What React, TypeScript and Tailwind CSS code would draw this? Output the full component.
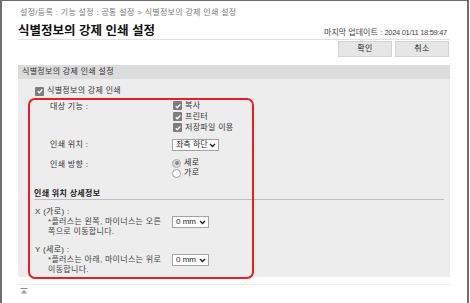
import React from 'react';

const Check = () => (
  <span className="flex h-[9px] w-[9px] shrink-0 items-center justify-center rounded-[1px] bg-[#7d7d7d]">
    <svg viewBox="0 0 10 10" className="h-[8px] w-[8px]">
      <path d="M2.2 5.3 4.2 7.2 7.9 2.9" fill="none" stroke="#fff" strokeWidth="1.7" />
    </svg>
  </span>
);

const Radio = ({ on }: { on?: boolean }) =>
  on ? (
    <span className="flex h-[9px] w-[9px] shrink-0 items-center justify-center rounded-full border border-[#a8a8a8] bg-[#dcdcdc]">
      <span className="h-[4px] w-[4px] rounded-full bg-[#8a8a8a]" />
    </span>
  ) : (
    <span className="h-[9px] w-[9px] shrink-0 rounded-full border border-[#9a9a9a] bg-white" />
  );

const Chevron = () => (
  <svg viewBox="0 0 8 6" className="h-[5px] w-[7px]">
    <path d="M1 1.2 4 4.3 7 1.2" fill="none" stroke="#222" strokeWidth="1.6" />
  </svg>
);

const Dropdown = ({ value, w }: { value: string; w: string }) => (
  <div className={`flex h-[12px] items-center justify-between border border-[#a3a3a3] bg-white pl-[3px] pr-[2px] tracking-normal ${w}`}>
    <span className="leading-[10px] text-[#222]">{value}</span>
    <Chevron />
  </div>
);

export default function App() {
  return (
    <div className="h-[303px] w-[470px] overflow-hidden bg-white font-['Liberation_Sans','Noto_Sans_CJK_KR',sans-serif] text-[8px] tracking-[0.3px] text-[#333]">
      <div className="h-full w-[469px] border-l-2 border-r-2 border-t border-[#6e6e6e] pl-[16px] pr-[17px]">
        {/* breadcrumb */}
        <div className="mt-[7px] pl-[2px] leading-[10px] text-[#7a7a7a]">
          설정/등록 : 기능 설정 : 공통 설정 &gt; 식별정보의 강제 인쇄 설정
        </div>

        {/* title */}
        <div className="mt-[5px] flex items-end justify-between border-b border-[#e0e0e0] pr-[3px]">
          <h1 className="h-[16px] text-[12.5px] font-bold leading-[16px] tracking-normal text-[#111]">식별정보의 강제 인쇄 설정</h1>
          <span className="mb-[1px] leading-[10px] tracking-normal text-[#444]">
            마지막 업데이트 : <span className="text-[7.5px] tracking-[-0.3px]">2024 01/11 18:59:47</span>
          </span>
        </div>

        {/* buttons */}
        <div className="mt-[1px] flex justify-end gap-[3px] pr-[1px]">
          <button className="h-[16px] w-[54px] border border-[#d2d2d2] bg-[#e6e6e6] text-[8px] leading-[14px] text-[#222]">확인</button>
          <button className="h-[16px] w-[54px] border border-[#d2d2d2] bg-[#e6e6e6] text-[8px] leading-[14px] text-[#222]">취소</button>
        </div>

        {/* section header */}
        <div className="mt-[8px] flex h-[14px] items-center bg-[#dcdcdc] pl-[4px] text-[#333]">
          식별정보의 강제 인쇄 설정
        </div>

        {/* section body */}
        <div className="relative h-[198px] bg-[#ededed]">
          <div className="flex items-center gap-[3px] pl-[17px] pt-[7px] leading-[10px]">
            <Check />
            <span>식별정보의 강제 인쇄</span>
          </div>

          <div className="mt-[4px] flex pl-[32px]">
            <div className="w-[123px] pt-[2px] leading-[10px]">대상 기능 :</div>
            <div className="flex flex-col">
              {['복사', '프린터', '저장파일 이용'].map(t => (
                <div key={t} className="flex h-[11px] items-center gap-[3px]">
                  <Check />
                  <span className="leading-[10px]">{t}</span>
                </div>
              ))}
            </div>
          </div>

          <div className="mt-[6px] flex items-center pl-[32px]">
            <div className="w-[122px] leading-[10px]">인쇄 위치 :</div>
            <Dropdown value="좌측 하단" w="w-[47px]" />
          </div>

          <div className="mt-[7px] flex pl-[32px]">
            <div className="w-[122px] pt-[2px] leading-[10px]">인쇄 방향 :</div>
            <div className="flex flex-col">
              <div className="flex h-[10px] items-center gap-[3px]">
                <Radio on />
                <span className="leading-[10px] text-[#222]">세로</span>
              </div>
              <div className="flex h-[10px] items-center gap-[3px]">
                <Radio />
                <span className="leading-[10px]">가로</span>
              </div>
            </div>
          </div>

          <div className="ml-[16px] mr-[6px] mt-[11px] border-b border-[#bdbdbd] font-bold leading-[10px] text-[#222]">
            인쇄 위치 상세정보
          </div>

          <div className="mt-[7px] flex pl-[17px]">
            <div className="w-[137px] leading-[10px]">
              <div>X (가로) :</div>
              <div className="whitespace-nowrap pl-[13px] text-[#444]">
                *플러스는 왼쪽, 마이너스는 오른
                <br />
                쪽으로 이동합니다.
              </div>
            </div>
            <div className="mt-[9px]">
              <Dropdown value="0 mm" w="w-[37px]" />
            </div>
          </div>

          <div className="mt-[8px] flex pl-[17px]">
            <div className="w-[137px] leading-[10px]">
              <div>Y (세로) :</div>
              <div className="whitespace-nowrap pl-[13px] text-[#444]">
                *플러스는 아래, 마이너스는 위로
                <br />
                이동합니다.
              </div>
            </div>
            <div className="mt-[9px]">
              <Dropdown value="0 mm" w="w-[37px]" />
            </div>
          </div>

          {/* highlight annotation */}
          <div className="absolute left-[10px] top-[19px] h-[181px] w-[226px] rounded-[7px] border-2 border-[#ee1d25]" />
        </div>

        <div className="mt-[7px] h-px bg-[#ececec]" />

        {/* back to top */}
        <div className="mt-[3px] pl-[2px]">
          <svg viewBox="0 0 8 6" className="h-[6px] w-[8px]">
            <rect x="0.5" y="0" width="7" height="1" fill="#8c8c8c" />
            <path d="M4 1.8 7.3 5.6H0.7Z" fill="#a5a5a5" />
          </svg>
        </div>
      </div>
    </div>
  );
}
